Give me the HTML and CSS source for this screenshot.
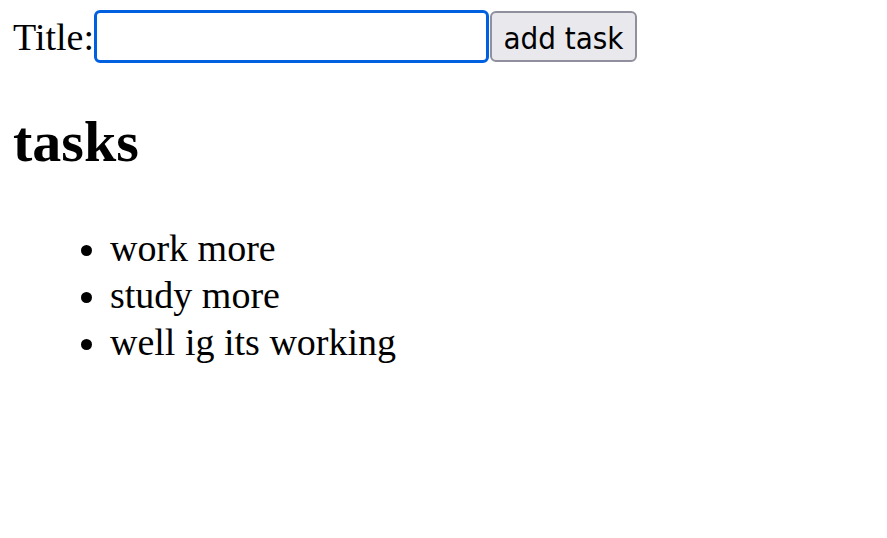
FILE: index.html
```html
<!DOCTYPE html>
<html>
<head>
<meta charset="utf-8">
<link rel="stylesheet" href="styles.css">
</head>
<body>
<form class="task-form">
  <label class="title-label" for="title">Title:</label><input class="title-input" id="title" type="text"><button class="add-btn" type="button">add task</button>
</form>
<section class="tasks">
  <h1 class="tasks-heading">tasks</h1>
  <ul class="task-list">
    <li>work more</li>
    <li>study more</li>
    <li>well ig its working</li>
  </ul>
</section>
</body>
</html>
```
FILE: styles.css
```css
html, body {
  background: #ffffff;
}
body {
  margin: 10px 13px;
  font-family: "Liberation Serif", "Times New Roman", serif;
  font-size: 38px;
  color: #000;
}
.task-form {
  display: flex;
  align-items: center;
  margin: 0;
}
.title-label {
  line-height: 52px;
}
.title-input {
  box-sizing: border-box;
  width: 395px;
  height: 53px;
  margin: 0;
  border: 3px solid #0060df;
  border-radius: 6px;
  background: #fff;
  outline: none;
  font-size: 20px;
}
.add-btn {
  box-sizing: border-box;
  width: 147px;
  height: 51px;
  margin: 0 0 0 1px;
  padding: 3px 0 0;
  border: 2px solid #8f8f9d;
  border-radius: 6px;
  background: #e9e9ed;
  color: #000;
  font-family: "DejaVu Sans Condensed", "DejaVu Sans", Tahoma, sans-serif;
  font-size: 31px;
  line-height: 1;
}
.tasks-heading {
  font-size: 58px;
  font-weight: bold;
  margin: 46px 0 0;
  line-height: 65px;
}
.task-list {
  margin: 51px 0 0;
  padding-left: 97px;
  line-height: 47px;
}
```
